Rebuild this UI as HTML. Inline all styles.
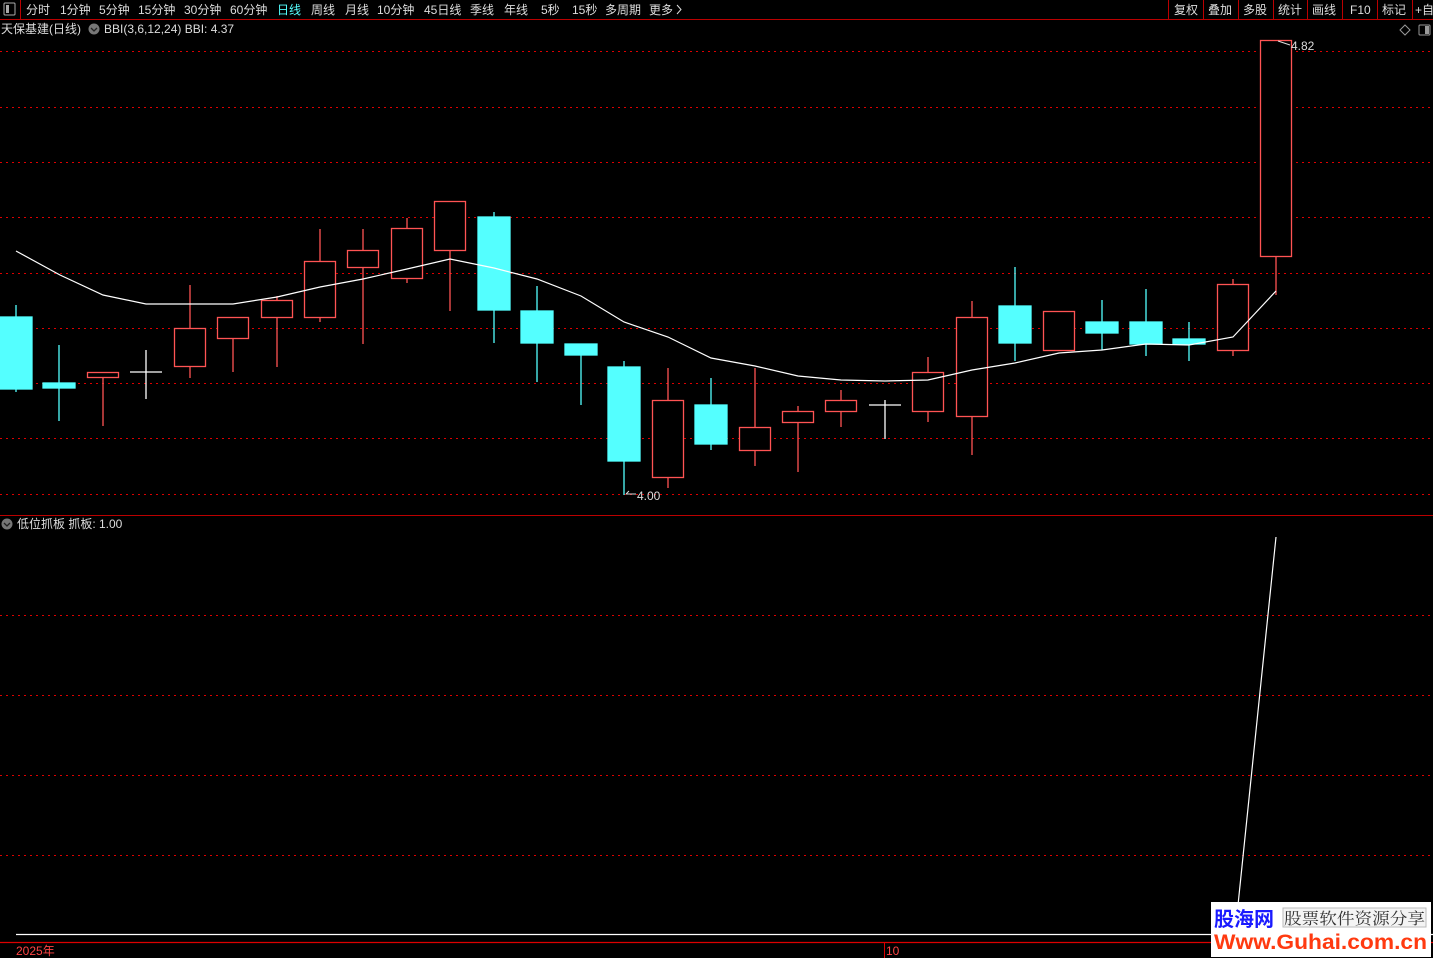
<!DOCTYPE html>
<html><head><meta charset="utf-8"><style>
html,body{margin:0;padding:0;background:#000;width:1433px;height:958px;overflow:hidden}
svg{display:block}
text{font-family:"Liberation Sans","Noto Sans CJK SC",sans-serif;font-size:12px}
</style></head><body>
<svg width="1433" height="958" viewBox="0 0 1433 958" xmlns="http://www.w3.org/2000/svg">
<rect width="1433" height="958" fill="#000"/>
<!-- top bar -->
<line x1="0" y1="19.5" x2="1433" y2="19.5" stroke="#b00" stroke-width="1"/>
<line x1="20.5" y1="0" x2="20.5" y2="19" stroke="#b00"/>
<rect x="4" y="3" width="11" height="12" fill="none" stroke="#aaa" rx="1"/>
<rect x="6" y="5" width="3" height="8" fill="#aaa"/>
<g fill="#ddd">
<text x="26" y="14">分时</text><text x="60" y="14">1分钟</text><text x="99" y="14">5分钟</text>
<text x="138" y="14">15分钟</text><text x="184" y="14">30分钟</text><text x="230" y="14">60分钟</text>
<text x="277" y="14" fill="#5ff">日线</text><text x="311" y="14">周线</text><text x="345" y="14">月线</text>
<text x="377" y="14">10分钟</text><text x="424" y="14">45日线</text><text x="470" y="14">季线</text>
<text x="504" y="14">年线</text><text x="541" y="14">5秒</text><text x="572" y="14">15秒</text>
<text x="605" y="14">多周期</text><text x="649" y="14">更多</text>
</g>
<path d="M677 5 L681 9.5 L677 14" fill="none" stroke="#ddd"/>
<g stroke="#b00"><line x1="1168.5" y1="0" x2="1168.5" y2="19"/><line x1="1203.5" y1="0" x2="1203.5" y2="19"/><line x1="1238.5" y1="0" x2="1238.5" y2="19"/><line x1="1273.5" y1="0" x2="1273.5" y2="19"/><line x1="1307.5" y1="0" x2="1307.5" y2="19"/><line x1="1342.5" y1="0" x2="1342.5" y2="19"/><line x1="1377.5" y1="0" x2="1377.5" y2="19"/><line x1="1412.5" y1="0" x2="1412.5" y2="19"/></g>
<g fill="#ddd"><text x="1174" y="14">复权</text><text x="1208" y="14">叠加</text><text x="1243" y="14">多股</text><text x="1278" y="14">统计</text><text x="1312" y="14">画线</text><text x="1350" y="14">F10</text><text x="1382" y="14">标记</text><text x="1415" y="14">+自</text></g>
<!-- title -->
<text x="1" y="33" fill="#ddd">天保基建(日线)</text>
<circle cx="94" cy="29" r="5.5" fill="#777"/><path d="M91 28 L94 31 L97 28" fill="none" stroke="#222" stroke-width="1.3"/>
<text x="104" y="33" fill="#ddd">BBI(3,6,12,24)  BBI: 4.37</text>
<path d="M1405 25 L1410 30 L1405 35 L1400 30Z" fill="none" stroke="#999"/>
<rect x="1419" y="25" width="11" height="10" fill="none" stroke="#999" rx="1"/><rect x="1425" y="26" width="4" height="8" fill="#999"/>
<!-- grids -->
<g stroke="#d00" stroke-width="1" stroke-dasharray="2,4" shape-rendering="crispEdges">
<line x1="0" y1="51.5" x2="1433" y2="51.5"/><line x1="0" y1="107.5" x2="1433" y2="107.5"/><line x1="0" y1="162.5" x2="1433" y2="162.5"/><line x1="0" y1="217.5" x2="1433" y2="217.5"/><line x1="0" y1="273.5" x2="1433" y2="273.5"/><line x1="0" y1="328.5" x2="1433" y2="328.5"/><line x1="0" y1="383.5" x2="1433" y2="383.5"/><line x1="0" y1="438.5" x2="1433" y2="438.5"/><line x1="0" y1="494.5" x2="1433" y2="494.5"/>
<line x1="0" y1="615.5" x2="1433" y2="615.5"/><line x1="0" y1="695.5" x2="1433" y2="695.5"/><line x1="0" y1="775.5" x2="1433" y2="775.5"/><line x1="0" y1="855.5" x2="1433" y2="855.5"/>
</g>
<line x1="0" y1="515.5" x2="1433" y2="515.5" stroke="#b00"/>
<!-- candles -->
<g stroke-width="1.3">
<g fill="#54ffff" stroke="#54ffff">
<line x1="16" y1="305" x2="16" y2="392"/><rect x="0" y="317" width="32" height="72"/>
<line x1="59" y1="345" x2="59" y2="421"/><rect x="43" y="383" width="32" height="5"/>
<line x1="494" y1="212" x2="494" y2="343"/><rect x="478" y="217" width="32" height="93"/>
<line x1="537" y1="286" x2="537" y2="382"/><rect x="521" y="311" width="32" height="32"/>
<line x1="581" y1="344" x2="581" y2="405"/><rect x="565" y="344" width="32" height="11"/>
<line x1="624" y1="361" x2="624" y2="495"/><rect x="608" y="367" width="32" height="94"/>
<line x1="711" y1="378" x2="711" y2="450"/><rect x="695" y="405" width="32" height="39"/>
<line x1="1015" y1="267" x2="1015" y2="361"/><rect x="999" y="306" width="32" height="37"/>
<line x1="1102" y1="300" x2="1102" y2="350"/><rect x="1086" y="322" width="32" height="11"/>
<line x1="1146" y1="289" x2="1146" y2="356"/><rect x="1130" y="322" width="32" height="22"/>
<line x1="1189" y1="322" x2="1189" y2="361"/><rect x="1173" y="339" width="32" height="5"/>
</g>
<g stroke="#ff5454" fill="none">
<line x1="103" y1="372" x2="103" y2="426"/><rect x="87.5" y="372.5" width="31" height="5" fill="#000"/>
<line x1="190" y1="285" x2="190" y2="378"/><rect x="174.5" y="328.5" width="31" height="38" fill="#000"/>
<line x1="233" y1="317" x2="233" y2="372"/><rect x="217.5" y="317.5" width="31" height="21" fill="#000"/>
<line x1="277" y1="296" x2="277" y2="367"/><rect x="261.5" y="300.5" width="31" height="17" fill="#000"/>
<line x1="320" y1="229" x2="320" y2="322"/><rect x="304.5" y="261.5" width="31" height="56" fill="#000"/>
<line x1="363" y1="229" x2="363" y2="344"/><rect x="347.5" y="250.5" width="31" height="17" fill="#000"/>
<line x1="407" y1="218" x2="407" y2="283"/><rect x="391.5" y="228.5" width="31" height="50" fill="#000"/>
<line x1="450" y1="201" x2="450" y2="311"/><rect x="434.5" y="201.5" width="31" height="49" fill="#000"/>
<line x1="668" y1="368" x2="668" y2="488"/><rect x="652.5" y="400.5" width="31" height="77" fill="#000"/>
<line x1="755" y1="368" x2="755" y2="466"/><rect x="739.5" y="427.5" width="31" height="23" fill="#000"/>
<line x1="798" y1="406" x2="798" y2="472"/><rect x="782.5" y="411.5" width="31" height="11" fill="#000"/>
<line x1="841" y1="390" x2="841" y2="427"/><rect x="825.5" y="400.5" width="31" height="11" fill="#000"/>
<line x1="928" y1="357" x2="928" y2="422"/><rect x="912.5" y="372.5" width="31" height="39" fill="#000"/>
<line x1="972" y1="301" x2="972" y2="455"/><rect x="956.5" y="317.5" width="31" height="99" fill="#000"/>
<rect x="1043.5" y="311.5" width="31" height="39" fill="#000"/>
<line x1="1233" y1="279" x2="1233" y2="356"/><rect x="1217.5" y="284.5" width="31" height="66" fill="#000"/>
<line x1="1276" y1="40" x2="1276" y2="295"/><rect x="1260.5" y="40.5" width="31" height="216" fill="#000"/>
</g>
<g stroke="#fff">
<line x1="146" y1="350" x2="146" y2="399"/><line x1="130" y1="372" x2="162" y2="372"/>
<line x1="885" y1="400" x2="885" y2="439"/><line x1="869" y1="405" x2="901" y2="405"/>
</g>
</g>
<polyline fill="none" stroke="#fff" stroke-width="1.2" points="16,251 60,275 103,295 146,304 190,304 233,304 277,297 320,287 363,279 407,269 450,259 494,268 537,279 581,296 624,322 668,337 711,358 755,366 798,376 841,380 885,381 928,380 972,370 1015,363 1059,353 1102,350 1146,344 1189,345 1233,337 1276,291"/>
<text x="1291" y="50" fill="#ddd">4.82</text><path d="M1278 41 L1290 45" stroke="#ddd"/>
<text x="637" y="500" fill="#ddd">4.00</text><path d="M626 494 L636 494 M626 494 L629 491" stroke="#ddd" fill="none"/>
<circle cx="7" cy="524" r="5.5" fill="#777"/><path d="M4 523 L7 526 L10 523" fill="none" stroke="#222" stroke-width="1.3"/>
<text x="17" y="528" fill="#ddd">低位抓板  抓板: 1.00</text>
<polyline fill="none" stroke="#fff" stroke-width="1.2" points="1276,537 1238,905"/>
<line x1="16" y1="934.5" x2="1433" y2="934.5" stroke="#fff" stroke-width="1.3"/>
<line x1="0" y1="942.5" x2="1433" y2="942.5" stroke="#d00" stroke-width="1.3"/>
<line x1="884.5" y1="942" x2="884.5" y2="958" stroke="#d00"/>
<text x="16" y="955" fill="#f44">2025年</text><text x="886" y="955" fill="#f44">10</text>
<rect x="1211" y="902" width="220" height="55" fill="#fff"/>
<text x="1214" y="926" fill="#1a1aff" style="font-size:20px;font-weight:bold">股海网</text>
<rect x="1283" y="908" width="143" height="19" fill="#f4f4f4" stroke="#bbb"/>
<text x="1284" y="924" fill="#333" textLength="141" lengthAdjust="spacingAndGlyphs" style="font-size:16px;font-family:'Noto Serif CJK SC',serif">股票软件资源分享</text>
<text x="1214" y="949" fill="#ff3a10" textLength="213" lengthAdjust="spacingAndGlyphs" style="font-size:21px;font-weight:bold">Www.Guhai.com.cn</text>
</svg>
</body></html>
